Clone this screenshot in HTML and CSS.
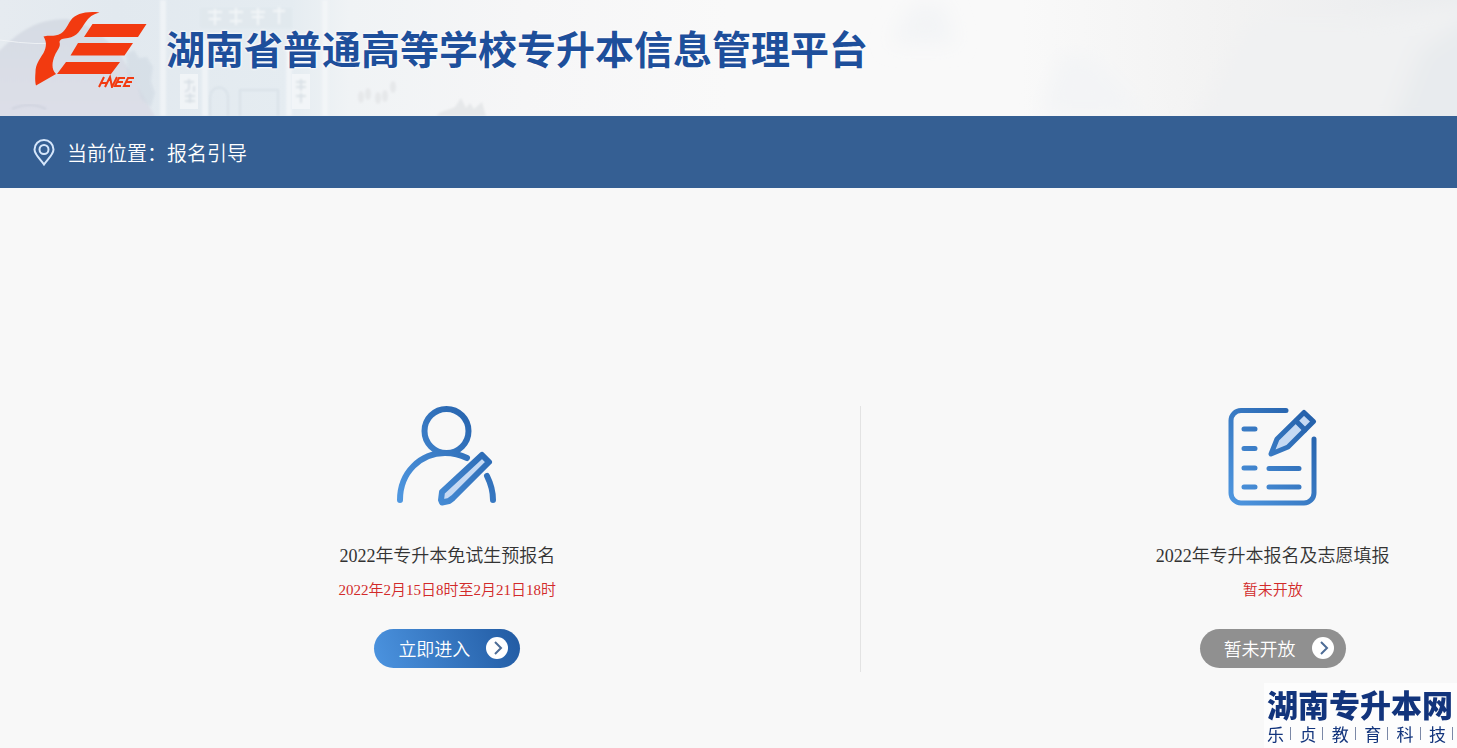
FILE: index.html
```html
<!DOCTYPE html>
<html lang="zh-CN">
<head>
    <meta charset="UTF-8">
    <meta name="viewport" content="width=device-width, initial-scale=1.0">
    <title>湖南省普通高等学校专升本信息管理平台</title>
    <link rel="stylesheet" href="styles.css">
</head>
<body>
    <header class="header">
        <svg class="header-art" viewBox="0 0 1457 116" preserveAspectRatio="xMinYMin slice" aria-hidden="true">
            <defs>
                <linearGradient id="sky" x1="0" y1="0" x2="1" y2="0">
                    <stop offset="0" stop-color="#e6ebf0"/>
                    <stop offset="0.08" stop-color="#e2e9ef"/>
                    <stop offset="0.2" stop-color="#e5ecf1"/>
                    <stop offset="0.24" stop-color="#f0f3f5"/>
                    <stop offset="0.36" stop-color="#f6f6f7"/>
                    <stop offset="0.5" stop-color="#f9f9f9"/>
                    <stop offset="0.7" stop-color="#f9f9f9"/>
                    <stop offset="0.85" stop-color="#f2f2f2"/>
                    <stop offset="1" stop-color="#eaecee"/>
                </linearGradient>
                <linearGradient id="hill" x1="0" y1="0" x2="0" y2="1">
                    <stop offset="0" stop-color="#d6dce4"/>
                    <stop offset="1" stop-color="#dddfe8"/>
                </linearGradient>
                <filter id="soft" x="-40%" y="-40%" width="180%" height="180%">
                    <feGaussianBlur stdDeviation="10"/>
                </filter>
                <filter id="edge">
                    <feGaussianBlur stdDeviation="1"/>
                </filter>
            </defs>
            <rect width="1457" height="116" fill="url(#sky)"/>
            <path d="M-4 54C15 36 32 19 66 19C86 22 100 33 119 52L157 120H-4Z" fill="url(#hill)" filter="url(#edge)"/>
            <path d="M126 54l8-4 5 8 8-1 6 10-2 14 4 12-4 14-10-8-4-14-10-12z" fill="#cdd7e1" opacity="0.5" filter="url(#edge)"/>
            <path d="M0 40q40 6 60 2" fill="none" stroke="#f2f5f8" opacity="0.8"/>
            <path d="M12 109q18-8 34 0" fill="none" stroke="#c3c8d4" stroke-width="2" opacity="0.5" filter="url(#edge)"/>
            <g opacity="0.55" filter="url(#edge)">
                <path d="M163 0v116M205 40v76M289 40v76M325 0v116" stroke="#f9fbfc" stroke-width="6"/>
                <path d="M200 8h92v20h-92z" fill="#dfe7ec"/>
                <path d="M208 12h14m-7-3v16m-6-6h12m8-7h14m-7-4v17m-6-4h12m9-9h14m-7-4v17m-6-8h12m9-6h12m-6-4v17" fill="none" stroke="#fff" stroke-width="2"/>
                <path d="M210 116V98c0-14 18-14 18 0v18M240 116V90h38v26" fill="none" stroke="#d0dae2" stroke-width="2"/>
            </g>
            <g opacity="0.6">
                <path d="M180 74h18v35h-18zM292 74h18v35h-18z" fill="#fafbfc"/>
                <path d="M184 82h10m-5-3v10l-4 3m9-6v6m-9 4h10m-5-3v10m-5-2h10M296 82h10m-5-3v12m-5-4h10m-10 9h10m-5-3v10" fill="none" stroke="#d3dae0" stroke-width="2" filter="url(#edge)"/>
            </g>
            <g fill="#e6e8ea" filter="url(#edge)">
                <ellipse cx="361" cy="97" rx="3" ry="6"/>
                <ellipse cx="368" cy="94" rx="3" ry="6"/>
                <ellipse cx="378" cy="98" rx="3" ry="6"/>
                <ellipse cx="385" cy="96" rx="3" ry="6"/>
                <ellipse cx="393" cy="87" rx="3" ry="6"/>
                <path d="M436 116l5-4 6-2 8-3 6-9 5 10 4-5 4 6 8-7 4 14z"/>
            </g>
            <g filter="url(#soft)">
                <path d="M890 44l22-40h32l12 40z" fill="#f3f4f6"/>
                <path d="M1040 116l20-60h30l60 60z" fill="#f3f4f6"/>
                <path d="M1190 130l60-110h110l120-20v130z" fill="#f0f1f2"/>
                <path d="M1390 130l30-80 60-40v120z" fill="#e8ebee"/>
            </g>
        </svg>
        <svg class="logo" viewBox="0 0 112 76" role="img" aria-label="HNEE">
            <g fill="#f23a10">
                <path d="M64.500 0.500C50-1 41 2 36 8C31 15 30 22 20 23.500C15 24 12 23 8.500 24.500C12 30 11.500 35 8.500 41C4 48 0.500 53 0.500 60C0 66 0 70 1 73.500L21 62C16 57 17 50 20 43C22 38 26 35 24.500 30C25 27 28 26.500 33 26C42 25 46 17 50 11C54 5 58 2 64.500 0.500Z"/>
                <path d="M57.500 12H111.500L103 25H49zM43 31h55l-8.500 12.500H35.500zM31 50h54l-9 12H22z"/>
            </g>
            <path d="M64 75l5-10M67 71h5M70 75l5-10 2 10 5-10M90 66h-6l-4 8h6M82 70h6M99 66h-6l-4 8h6M91 70h6" fill="none" stroke="#f23a10" stroke-width="2"/>
        </svg>
        <h1 class="site-title">湖南省普通高等学校专升本信息管理平台</h1>
    </header>

    <nav class="location">
        <svg class="pin" viewBox="0 0 22 27" aria-hidden="true">
            <path d="M11 25.500C8 21 1.500 15.500 1.500 10.500a9.500 9.500 0 0 1 19 0C20.500 15.500 14 21 11 25.500Z"/>
            <circle cx="11" cy="10.500" r="4.500"/>
        </svg>
        <span>当前位置：报名引导</span>
    </nav>

    <main class="guide">
        <section class="entry">
            <svg class="entry-icon" viewBox="0 0 100 100" aria-hidden="true">
                <defs>
                    <linearGradient id="blue" gradientUnits="userSpaceOnUse" x1="0" y1="90" x2="90" y2="10">
                        <stop offset="0" stop-color="#4f97e0"/>
                        <stop offset="1" stop-color="#2460aa"/>
                    </linearGradient>
                </defs>
                <g fill="none" stroke="url(#blue)" stroke-width="6" stroke-linecap="round" stroke-linejoin="round">
                    <circle cx="49.500" cy="25" r="22"/>
                    <path d="M3 94C3 66 24 47 48 47C57 47 64 49 70 52M90 70C94 78 96 86 96 94"/>
                    <path d="M85 49L92 56L56 92L52 95L45 96.500L44 94L45 86Z" fill="#c5d9f3"/>
                </g>
            </svg>
            <h2 class="entry-title">2022年专升本免试生预报名</h2>
            <p class="entry-time">2022年2月15日8时至2月21日18时</p>
            <button class="entry-button" type="button">
                立即进入
                <svg class="arrow" viewBox="0 0 22 22" aria-hidden="true">
                    <circle cx="11" cy="11" r="11"/>
                    <path d="M9 5l6 6-6 6"/>
                </svg>
            </button>
        </section>

        <section class="entry entry-next">
            <svg class="entry-icon" viewBox="0 0 100 100" aria-hidden="true">
                <g fill="none" stroke="url(#blue)" stroke-width="5" stroke-linecap="round" stroke-linejoin="round">
                    <path d="M63 4.500H18A10 10 0 0 0 8 14.500V87A10 10 0 0 0 18 97H81A10 10 0 0 0 91 87V33"/>
                    <path d="M21 23h11M21 42.500h11M21 62h11M21 81h11M46 62.500h30M46 81h30"/>
                    <path d="M81 6.500L90.500 15.500L65 41L48 48L54 33Z" fill="#c5d9f3"/>
                    <path d="M73 15L82 24"/>
                </g>
            </svg>
            <h2 class="entry-title">2022年专升本报名及志愿填报</h2>
            <p class="entry-time">暂未开放</p>
            <button class="entry-button closed" type="button">
                暂未开放
                <svg class="arrow" viewBox="0 0 22 22" aria-hidden="true">
                    <circle cx="11" cy="11" r="11"/>
                    <path d="M9 5l6 6-6 6"/>
                </svg>
            </button>
        </section>
    </main>

    <aside class="brand">
        <div class="brand-name">湖南专升本网</div>
        <div class="brand-company">
            <span>乐</span><span>贞</span><span>教</span><span>育</span><span>科</span><span>技</span>
        </div>
    </aside>
</body>
</html>
```
FILE: styles.css
```css
* {
    box-sizing: border-box;
}
body {
    margin: 0;
    min-height: 100vh;
    background: #f8f8f8;
    color: #333;
    font-family: "Liberation Serif", "Noto Sans CJK SC", serif;
    font-weight: 350;
}
.header {
    position: relative;
    display: flex;
    align-items: flex-start;
    gap: 19px;
    height: 116px;
    padding: 12px 35px;
    overflow: hidden;
}
.header-art {
    position: absolute;
    inset: 0;
    width: 100%;
    height: 100%;
}
.logo {
    position: relative;
    flex: none;
    width: 112px;
    height: 76px;
}
.site-title {
    position: relative;
    margin: 0;
    color: #1e4f9b;
    font-family: "Noto Sans CJK SC", sans-serif;
    font-size: 39px;
    font-weight: 700;
    line-height: 70px;
    white-space: nowrap;
    text-shadow: 0 0 3px #fff, 0 0 3px #fff;
}
.location {
    display: flex;
    align-items: center;
    gap: 12px;
    height: 72px;
    padding: 0 33px;
    background: #355f93;
    color: #fff;
    font-size: 20px;
}
.pin {
    width: 22px;
    height: 27px;
    fill: none;
    stroke: #d5e6fb;
    stroke-width: 2;
}
.guide {
    display: flex;
    padding: 218px 0 0 35px;
}
.entry {
    flex: 0 0 58%;
    display: flex;
    flex-direction: column;
    align-items: center;
    height: 266px;
}
.entry-next {
    flex: 1;
    padding-left: 16%;
    border-left: 1px solid #e3e3e3;
}
.entry-icon {
    width: 100px;
    height: 100px;
}
.entry-title {
    margin: 36px 0 0;
    font-size: 18px;
    font-weight: 350;
    line-height: 28px;
    white-space: nowrap;
}
.entry-time {
    margin: 8px 0 27px;
    color: #d22a2a;
    font-size: 15px;
    line-height: 24px;
}
.entry-button {
    display: flex;
    align-items: center;
    gap: 16px;
    height: 39px;
    padding: 0 12px 2px 24px;
    border: 0;
    border-radius: 20px;
    background: linear-gradient(70deg, #4c94e0, #215aa2);
    color: #fff;
    font-family: inherit;
    font-size: 18px;
    font-weight: 350;
    cursor: pointer;
}
.entry-button.closed {
    background: #909090;
}
.arrow {
    width: 22px;
    height: 22px;
    fill: #fff;
}
.arrow path {
    fill: none;
    stroke: #4d6c96;
    stroke-width: 2;
}
.brand {
    position: fixed;
    right: 0;
    bottom: 0;
    padding: 3px 4px 3px 3px;
    background: #fdfdfd;
    color: #12347c;
    font-family: "Noto Sans CJK SC", sans-serif;
}
.brand-name {
    font-size: 31px;
    font-weight: 900;
    line-height: 36px;
}
.brand-company {
    display: flex;
    justify-content: space-between;
    font-size: 17px;
    font-weight: 400;
    line-height: 23px;
}
.brand-company span {
    display: flex;
    align-items: center;
    gap: 6px;
}
.brand-company span::after {
    content: "";
    width: 1px;
    height: 13px;
    background: #7b88a6;
}
```
